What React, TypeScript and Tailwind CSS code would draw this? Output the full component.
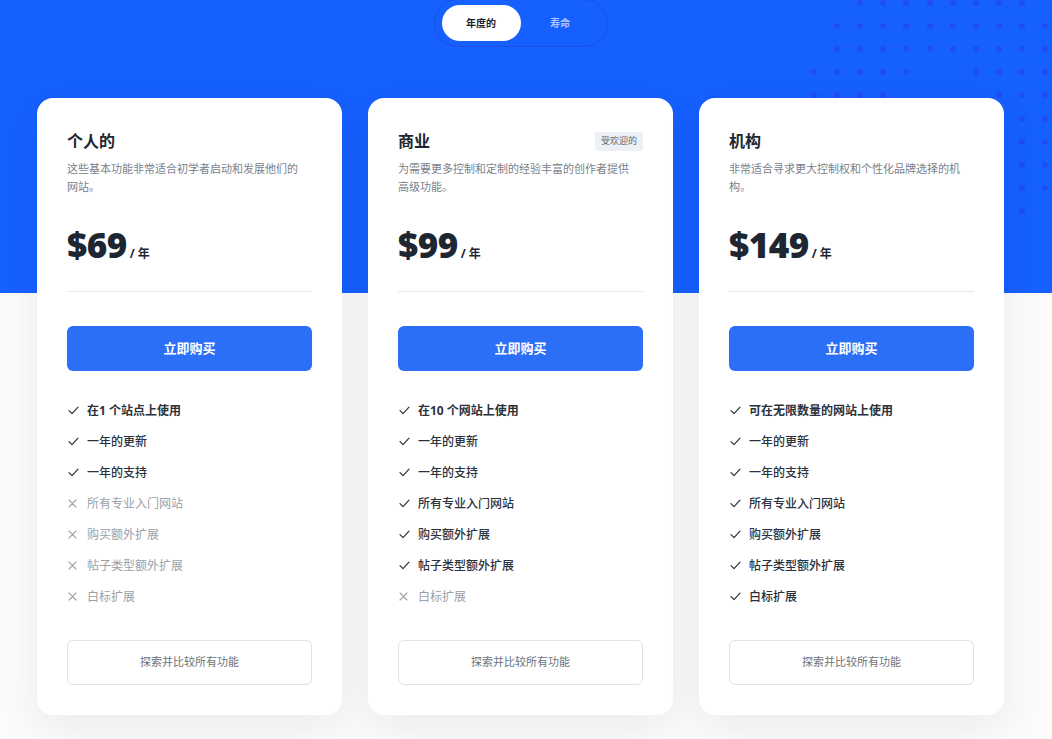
import React from "react";

const dots: [number, number][] = [];
const rows: { y: number; xs: number[] }[] = [
  { y: 3, xs: [860, 883, 906, 930, 953, 976, 999, 1022] },
  { y: 26, xs: [837, 860, 883, 906, 930, 953, 976, 999, 1022, 1045] },
  { y: 49, xs: [837, 860, 883, 906, 930, 953, 976, 999, 1022, 1045] },
  { y: 72, xs: [814, 837, 860, 883, 906, 976, 999, 1022, 1045] },
  { y: 95, xs: [814, 837, 860, 883, 999, 1022, 1045] },
  { y: 119, xs: [1022, 1045] },
  { y: 142, xs: [1022, 1045] },
  { y: 165, xs: [1022, 1045] },
  { y: 188, xs: [1022, 1045] },
  { y: 211, xs: [1022] },
];
rows.forEach((r) => r.xs.forEach((x) => dots.push([x, r.y])));

type Feature = { text: string; ok: boolean; bold?: boolean };

const plans: {
  name: string;
  desc: string[];
  price: string;
  badge?: boolean;
  features: Feature[];
}[] = [
  {
    name: "个人的",
    desc: ["这些基本功能非常适合初学者启动和发展他们的", "网站。"],
    price: "$69",
    features: [
      { text: "在1 个站点上使用", ok: true, bold: true },
      { text: "一年的更新", ok: true },
      { text: "一年的支持", ok: true },
      { text: "所有专业入门网站", ok: false },
      { text: "购买额外扩展", ok: false },
      { text: "帖子类型额外扩展", ok: false },
      { text: "白标扩展", ok: false },
    ],
  },
  {
    name: "商业",
    desc: ["为需要更多控制和定制的经验丰富的创作者提供", "高级功能。"],
    price: "$99",
    badge: true,
    features: [
      { text: "在10 个网站上使用", ok: true, bold: true },
      { text: "一年的更新", ok: true },
      { text: "一年的支持", ok: true },
      { text: "所有专业入门网站", ok: true },
      { text: "购买额外扩展", ok: true },
      { text: "帖子类型额外扩展", ok: true },
      { text: "白标扩展", ok: false },
    ],
  },
  {
    name: "机构",
    desc: ["非常适合寻求更大控制权和个性化品牌选择的机", "构。"],
    price: "$149",
    features: [
      { text: "可在无限数量的网站上使用", ok: true, bold: true },
      { text: "一年的更新", ok: true },
      { text: "一年的支持", ok: true },
      { text: "所有专业入门网站", ok: true },
      { text: "购买额外扩展", ok: true },
      { text: "帖子类型额外扩展", ok: true },
      { text: "白标扩展", ok: true },
    ],
  },
];

const Check = () => (
  <svg width="11" height="9" viewBox="0 0 11 9" fill="none">
    <path d="M1 4.6 L4 7.6 L10 1.2" stroke="#2a3340" strokeWidth="1.2" strokeLinecap="round" strokeLinejoin="round" />
  </svg>
);
const Cross = () => (
  <svg width="9" height="9" viewBox="0 0 9 9" fill="none">
    <path d="M1 1 L8 8 M8 1 L1 8" stroke="#a3a8b0" strokeWidth="1.2" strokeLinecap="round" />
  </svg>
);

export default function App() {
  return (
    <div
      className="relative w-[1052px] h-[739px] overflow-hidden bg-[linear-gradient(to_bottom,#1660ff_0,#1660ff_293px,#fbfbfc_293px)]"
      style={{ fontFamily: '"Noto Sans", "Noto Sans CJK SC", sans-serif' }}
    >
      {dots.map(([x, y], i) => (
        <span
          key={i}
          className="absolute w-[6px] h-[6px] rounded-full bg-[#1f4ef0]"
          style={{ left: x - 3, top: y - 3 }}
        />
      ))}

      <div className="relative flex justify-center pl-[37px] pr-[48px]">
        <div className="-mt-[1px] flex items-center h-[48px] w-[174px] rounded-full border border-[#1c50e6] px-[7px]">
          <div className="flex items-center justify-center w-[80px] h-[36px] rounded-full bg-white text-[10px] font-bold text-[#1b2330]">
            年度的
          </div>
          <div className="flex items-center justify-center w-[80px] h-[36px] text-[10px] font-bold text-[#b4c8ff]">
            寿命
          </div>
        </div>
      </div>

      <div className="relative flex gap-[26px] pl-[37px] mt-[51px]">
        {plans.map((p) => (
          <div
            key={p.name}
            className="w-[305px] h-[617px] rounded-[16px] bg-white px-[30px] pt-[31px] pb-[30px] shadow-[0_12px_40px_rgba(20,30,60,0.07)] flex flex-col"
          >
            <div className="flex items-center justify-between h-[24px]">
              <div className="text-[16px] font-bold text-[#1d2631] leading-[24px]">{p.name}</div>
              {p.badge && (
                <div className="h-[19px] px-[6px] flex items-center rounded-[3px] bg-[#edf1f6] text-[9px] text-[#5d6672]">
                  受欢迎的
                </div>
              )}
            </div>
            <div className="mt-[7px] text-[11px] leading-[18px] text-[#7a818b]">
              {p.desc.map((d) => (
                <div key={d}>{d}</div>
              ))}
            </div>
            <div className="mt-[31px] flex items-baseline">
              <span
                className="text-[35px] leading-[36px] font-extrabold text-[#1d2631] tracking-[-0.5px]"
                style={{ fontFamily: '"Open Sans", sans-serif' }}
              >
                {p.price}
              </span>
              <span className="ml-[3px] text-[12px] font-bold text-[#1d2631]">/ 年</span>
            </div>
            <div className="mt-[28px] h-px bg-[#e3e6ea]" />
            <button className="mt-[34px] h-[45px] w-full rounded-[6px] bg-[#2b6ff6] text-white text-[13px] font-bold">
              立即购买
            </button>
            <div className="mt-[24px] flex flex-col">
              {p.features.map((f) => (
                <div key={f.text} className="h-[31px] flex items-center">
                  <span className="w-[20px] flex items-center pl-[1px]">
                    {f.ok ? <Check /> : <Cross />}
                  </span>
                  <span
                    className={
                      "text-[12px] " +
                      (f.ok
                        ? f.bold
                          ? "font-bold text-[#2a323d]"
                          : "font-medium text-[#2a323d]"
                        : "text-[#9aa0a8]")
                    }
                  >
                    {f.text}
                  </span>
                </div>
              ))}
            </div>
            <button className="mt-[28px] h-[45px] w-full rounded-[6px] border border-[#dfe2e6] bg-white text-[11px] text-[#6c737d]">
              探索并比较所有功能
            </button>
          </div>
        ))}
      </div>
    </div>
  );
}
